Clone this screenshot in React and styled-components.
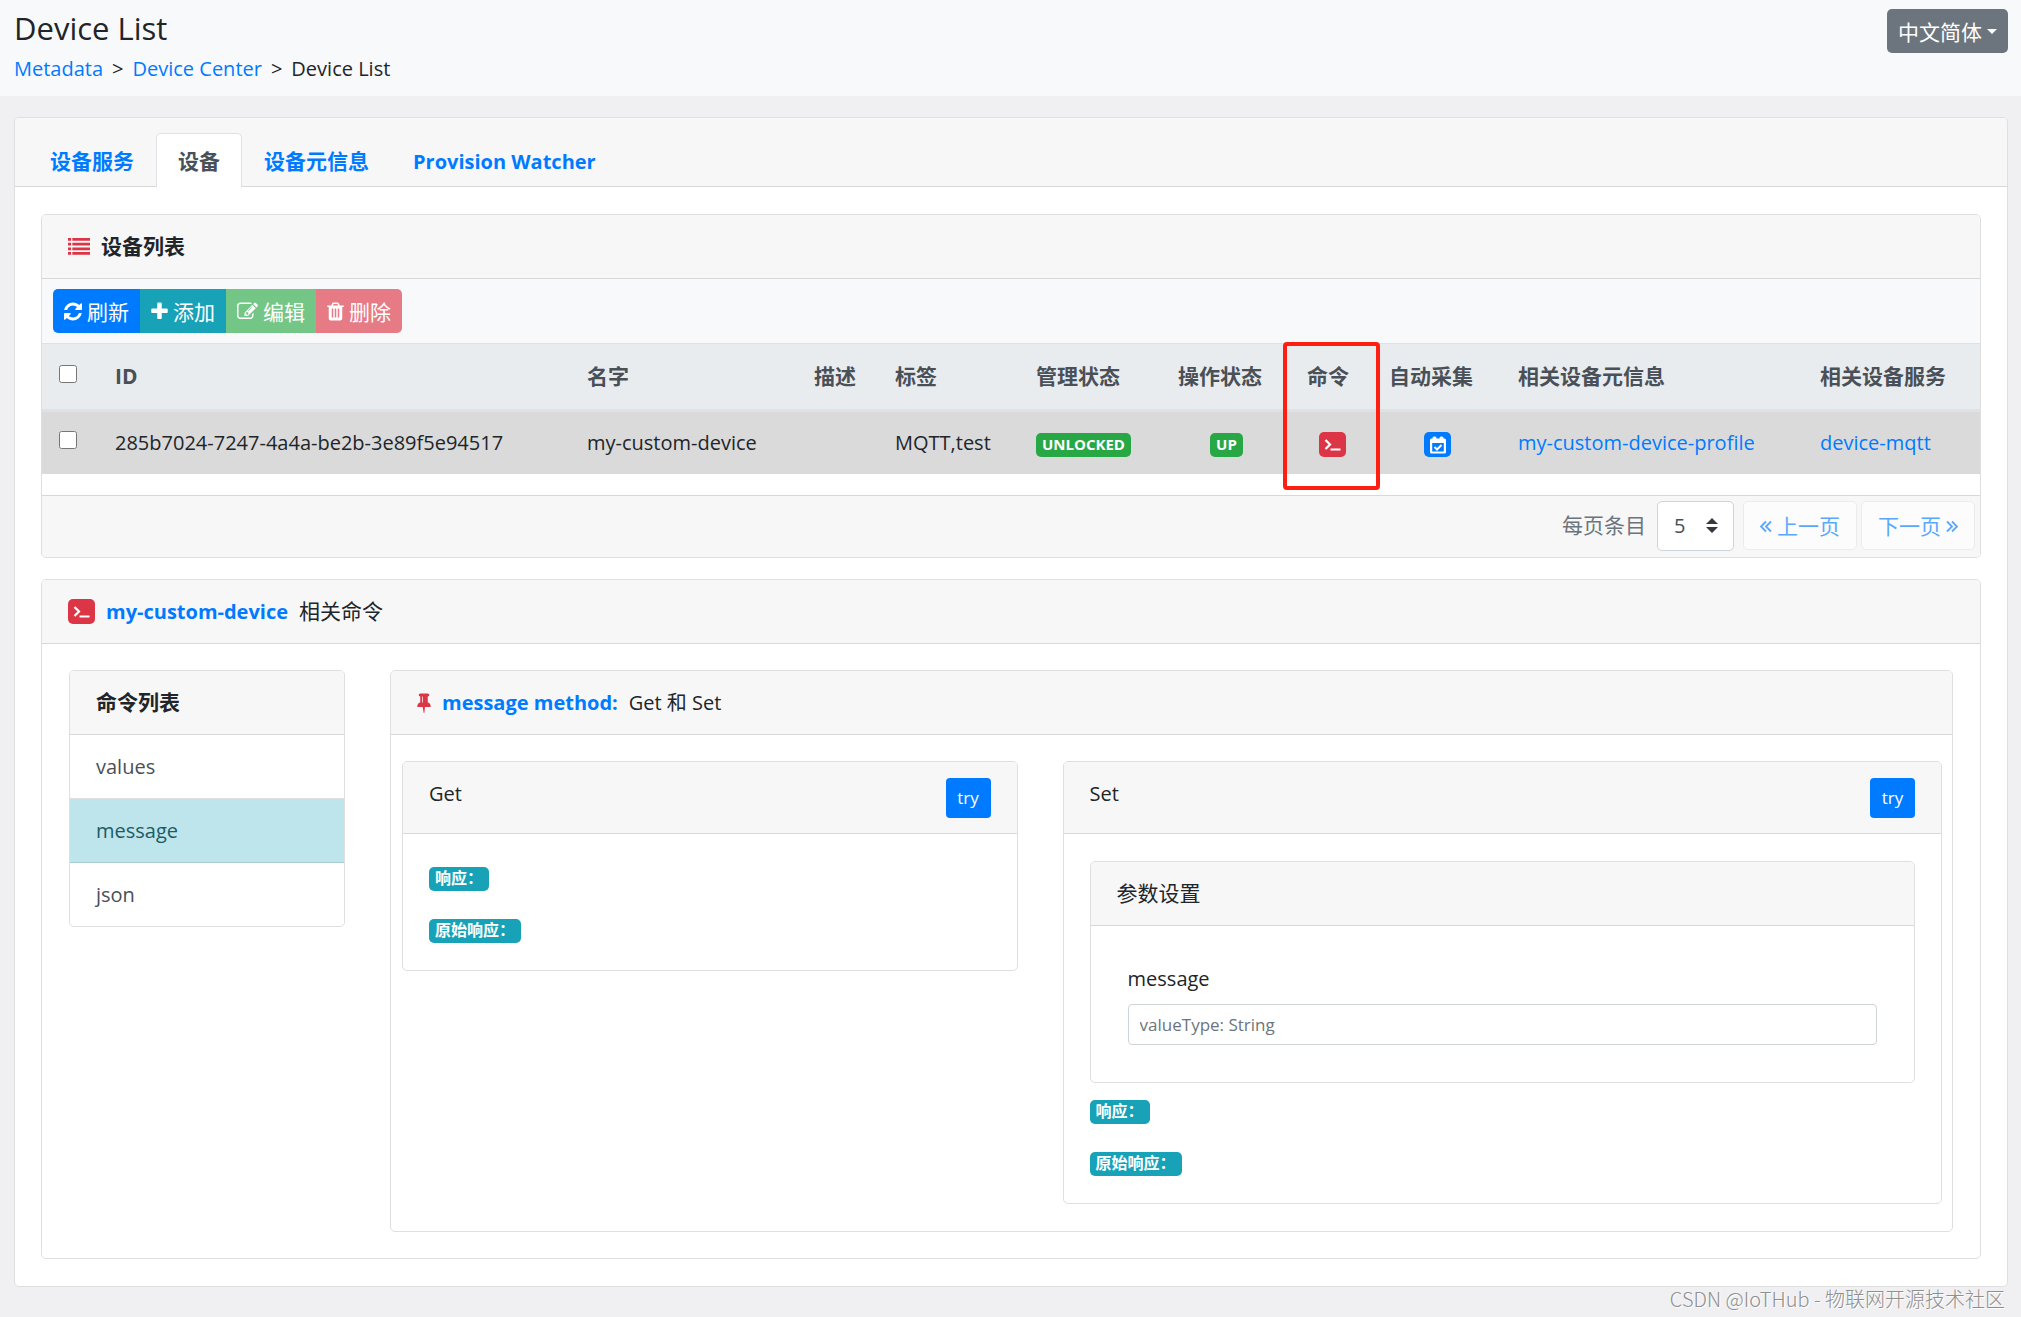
import React, { useState } from "react";
import styled, { createGlobalStyle } from "styled-components";

const GlobalStyle = createGlobalStyle`
* {
  box-sizing: border-box;
}
body {
  margin: 0;
  background: #f0f0f2;
  color: #212529;
  font-family: "Open Sans", "Noto Sans CJK SC", sans-serif;
  font-size: 20px;
  line-height: 31px;
}
button, input, select {
  font-family: inherit;
}
a {
  color: #007bff;
  text-decoration: none;
}
`;

const PageHeader = styled.header`
  display: flex;
  justify-content: space-between;
  align-items: flex-start;
  padding: 9px 13px 12px 14px;
  background: #f8f9fb;
`;

const PageTitle = styled.h1`
  margin: 0 0 5px;
  font-size: 31px;
  font-weight: 500;
  line-height: 39px;
`;

const Breadcrumb = styled.nav`
  display: flex;
  gap: 9px;
  font-weight: 500;
`;

const LangButton = styled.button`
  display: flex;
  align-items: center;
  gap: 5px;
  height: 44px;
  padding: 0 11px;
  border: 0;
  border-radius: 5px;
  background: #6c757d;
  color: #fff;
  font-size: 21px;
`;

const Caret = styled.span`
  border-top: 5px solid #fff;
  border-left: 5px solid transparent;
  border-right: 5px solid transparent;
`;

const Page = styled.main`
  padding: 21px 13px 0 14px;
`;

const Card = styled.section`
  border: 1px solid #dfdfdf;
  border-radius: 5px;
  background: #fff;
  min-width: 0;
`;

const CardHeader = styled.div`
  display: flex;
  align-items: center;
  gap: 11px;
  height: 64px;
  padding: 0 26px;
  border-bottom: 1px solid #d8d8d8;
  border-radius: 4px 4px 0 0;
  background: #f7f7f7;
  font-size: ${(props) => (props.$cjk ? "21px" : "20px")};
  font-weight: ${(props) => (props.$bold ? "bold" : "normal")};
  svg {
    color: #dc3545;
  }
`;

const TabBar = styled.nav`
  display: flex;
  padding: 15px 13px 0;
  border-bottom: 1px solid #d8d8d8;
  border-radius: 4px 4px 0 0;
  background: #f7f7f7;
`;

const Tab = styled.a`
  height: 54px;
  margin-bottom: -1px;
  padding: 12px 21px;
  border: 1px solid ${(props) => (props.$active ? "#dee2e6" : "transparent")};
  border-bottom: 0;
  border-radius: 5px 5px 0 0;
  background: ${(props) => (props.$active ? "#fff" : "transparent")};
  color: ${(props) => (props.$active ? "#495057" : "#007bff")};
  font-size: ${(props) => (props.$cjk ? "21px" : "20px")};
  font-weight: bold;
`;

const TabContent = styled.div`
  display: flex;
  flex-direction: column;
  gap: 21px;
  padding: 27px 26px;
`;

const Toolbar = styled.div`
  display: flex;
  padding: 10px 11px;
  background: #f8f9fb;
`;

const ToolButton = styled.button`
  display: flex;
  align-items: center;
  gap: 5px;
  height: 44px;
  padding: 0 11px;
  border: 0;
  background: ${(props) => props.$color};
  color: #fff;
  font-size: 21px;
  &:first-child {
    border-radius: 5px 0 0 5px;
  }
  &:last-child {
    border-radius: 0 5px 5px 0;
  }
`;

const Table = styled.table`
  width: 100%;
  margin-bottom: 21px;
  border-collapse: collapse;
  table-layout: fixed;
`;

const Th = styled.th`
  position: relative;
  height: 67px;
  padding: 0 0 0 16px;
  border-top: 1px solid #dee2e6;
  border-bottom: 3px solid #dee2e6;
  background: #e9ecef;
  color: #495057;
  font-size: 21px;
  text-align: left;
  white-space: nowrap;
`;

const Td = styled.td`
  height: 63px;
  padding: 0 16px;
  background: #dadada;
  text-align: ${(props) => (props.$center ? "center" : "left")};
  white-space: nowrap;
`;

const CheckBox = styled.input`
  display: block;
  width: 18px;
  height: 18px;
  margin: 0 0 6px 1px;
`;

const Highlight = styled.div`
  position: absolute;
  z-index: 1;
  top: -2px;
  left: -8px;
  right: -7px;
  height: 148px;
  border: 4px solid #ff1e12;
  border-radius: 4px;
`;

const Badge = styled.span`
  display: inline-flex;
  align-items: center;
  height: 24px;
  padding: 0 6px;
  border-radius: 5px;
  background: ${(props) => props.$color};
  color: #fff;
  font-size: ${(props) => (props.$cjk ? "16px" : "15px")};
  font-weight: bold;
  vertical-align: middle;
`;

const IconBadge = styled.span`
  display: inline-flex;
  align-items: center;
  justify-content: center;
  width: 27px;
  height: 25px;
  border-radius: 5px;
  background: ${(props) => props.$color};
  vertical-align: middle;
  && svg {
    color: #fff;
  }
`;

const TableFooter = styled.div`
  display: flex;
  justify-content: flex-end;
  align-items: flex-start;
  height: 62px;
  padding: 5px;
  border-top: 1px solid #d8d8d8;
  border-radius: 0 0 4px 4px;
  background: #f7f7f7;
  font-size: 21px;
`;

const PageSize = styled.label`
  display: flex;
  align-items: center;
  gap: 11px;
  margin-right: 9px;
  color: #6c757d;
`;

const Select = styled.select`
  width: 77px;
  height: 50px;
  padding: 0 16px;
  border: 1px solid #ced4da;
  border-radius: 5px;
  appearance: none;
  background: #fff url("data:image/svg+xml,%3csvg xmlns='http://www.w3.org/2000/svg' viewBox='0 0 4 5'%3e%3cpath fill='%23343a40' d='M2 0L0 2h4zm0 5L0 3h4z'/%3e%3c/svg%3e") no-repeat right 15px center / 12px 15px;
  color: #495057;
  font-size: 20px;
`;

const PagerButton = styled.button`
  display: flex;
  align-items: center;
  justify-content: center;
  gap: 5px;
  width: 114px;
  height: 49px;
  margin-right: ${(props) => (props.$last ? "0" : "4px")};
  padding: 0;
  border: 1px solid #ebecee;
  border-radius: 5px;
  background: #fcfcfc;
  color: #59a8fd;
  font-size: 21px;
`;

const CommandBody = styled.div`
  display: grid;
  grid-template-columns: 276px 1fr;
  align-items: start;
  gap: 45px;
  padding: 26px 27px;
`;

const CommandItem = styled.a`
  display: block;
  padding: 16px 26px;
  border-bottom: 1px solid ${(props) => (props.$active ? "#a9ccd2" : "#dfdfdf")};
  background: ${(props) => (props.$active ? "#bee5eb" : "#fff")};
  color: ${(props) => (props.$active ? "#1d5b66" : "#495057")};
  &:last-child {
    border-bottom: 0;
    border-radius: 0 0 5px 5px;
  }
`;

const DeviceLink = styled.a`
  font-size: 20px;
  font-weight: bold;
`;

const MethodName = styled.strong`
  color: #007bff;
`;

const MethodBody = styled.div`
  display: grid;
  grid-template-columns: 7fr 10fr;
  align-items: start;
  gap: 45px;
  padding: 26px 10px 27px 11px;
`;

const MethodHeader = styled.div`
  display: flex;
  justify-content: space-between;
  align-items: flex-start;
  height: 72px;
  padding: 16px 26px;
  border-bottom: 1px solid #d8d8d8;
  border-radius: 4px 4px 0 0;
  background: #f7f7f7;
`;

const TryButton = styled.button`
  width: 45px;
  height: 40px;
  padding: 0;
  border: 0;
  border-radius: 4px;
  background: #007bff;
  color: #fff;
  font-size: 17px;
`;

const Results = styled.div`
  display: flex;
  flex-direction: column;
  align-items: flex-start;
  gap: 28px;
  padding: ${(props) => (props.$below ? "17px 26px 27px" : "33px 26px 27px")};
`;

const ParamCard = styled(Card)`
  margin: 27px 26px 0;
`;

const ParamForm = styled.div`
  padding: 37px;
`;

const ParamLabel = styled.label`
  display: block;
  margin-bottom: 10px;
`;

const TextInput = styled.input`
  display: block;
  width: 100%;
  height: 41px;
  padding: 0 11px;
  border: 1px solid #ced4da;
  border-radius: 4px;
  font-size: 17px;
  &::placeholder {
    color: #6c757d;
  }
`;

const Watermark = styled.footer`
  padding: 0 16px 4px;
  color: #8f8f8f;
  font-family: "Noto Sans CJK SC", sans-serif;
  font-size: 20px;
  font-weight: 300;
  line-height: 24px;
  text-align: right;
  text-shadow: 1px 1px 0 #fff;
`;

const icons = {
  refresh: {
    box: [128, 1536],
    d: "M1639 1056q0 5-1 7-64 268-268 434.5t-478 166.5q-146 0-282.5-55t-243.5-157l-129 129q-19 19-45 19t-45-19-19-45v-448q0-26 19-45t45-19h448q26 0 45 19t19 45-19 45l-137 137q71 66 161 102t187 36q134 0 250-65t186-179q11-17 53-117 8-23 30-23h192q13 0 22.5 9.5t9.5 22.5zm25-800v448q0 26-19 45t-45 19h-448q-26 0-45-19t-19-45 19-45l138-138q-148-137-349-137-134 0-250 65t-186 179q-11 17-53 117-8 23-30 23h-199q-13 0-22.5-9.5t-9.5-22.5v-7q65-268 270-434.5t480-166.5q146 0 284 55.5t245 156.5l130-129q19-19 45-19t45 19 19 45z",
  },
  plus: {
    box: [192, 1408],
    d: "M1600 736v192q0 40-28 68t-68 28h-416v416q0 40-28 68t-68 28h-192q-40 0-68-28t-28-68v-416h-416q-40 0-68-28t-28-68v-192q0-40 28-68t68-28h416v-416q0-40 28-68t68-28h192q40 0 68 28t28 68v416h416q40 0 68 28t28 68z",
  },
  edit: {
    box: [0, 1792],
    d: "M888 1184l116-116-152-152-116 116v56h96v96h56zm440-720q-16-16-33 1l-350 350q-17 17-1 33t33-1l350-350q17-17 1-33zm80 594v190q0 119-84.5 203.5t-203.5 84.5h-832q-119 0-203.5-84.5t-84.5-203.5v-832q0-119 84.5-203.5t203.5-84.5h832q63 0 117 25 15 7 18 23 3 17-9 29l-49 49q-14 14-32 8-23-6-45-6h-832q-66 0-113 47t-47 113v832q0 66 47 113t113 47h832q66 0 113-47t47-113v-126q0-13 9-22l64-64q15-15 35-7t20 29zm-96-738l288 288-672 672h-288v-288zm444 132l-92 92-288-288 92-92q28-28 68-28t68 28l152 152q28 28 28 68t-28 68z",
  },
  trash: {
    box: [192, 1408],
    d: "M704 1376v-704q0-14-9-23t-23-9h-64q-14 0-23 9t-9 23v704q0 14 9 23t23 9h64q14 0 23-9t9-23zm256 0v-704q0-14-9-23t-23-9h-64q-14 0-23 9t-9 23v704q0 14 9 23t23 9h64q14 0 23-9t9-23zm256 0v-704q0-14-9-23t-23-9h-64q-14 0-23 9t-9 23v704q0 14 9 23t23 9h64q14 0 23-9t9-23zm-544-992h448l-48-117q-7-9-17-11h-317q-10 2-17 11zm928 32v64q0 14-9 23t-23 9h-96v948q0 83-47 143.5t-113 60.5h-832q-66 0-113-58.5t-47-141.5v-952h-96q-14 0-23-9t-9-23v-64q0-14 9-23t23-9h309l70-167q15-37 54-63t79-26h320q40 0 79 26t54 63l70 167h309q14 0 23 9t9 23z",
  },
  list: {
    box: [0, 1792],
    d: "M0 160h256v224H0zM352 160h1440v224H352zM0 544h256v224H0zM352 544h1440v224H352zM0 928h256v224H0zM352 928h1440v224H352zM0 1312h256v224H0zM352 1312h1440v224H352z",
  },
  pin: {
    box: [320, 1152],
    d: "M800 864v-448q0-14-9-23t-23-9-23 9-9 23v448q0 14 9 23t23 9 23-9 9-23zm672 352q0 26-19 45t-45 19h-429l-51 483q-2 12-10.5 20.5t-20.5 8.5h-1q-27 0-32-27l-76-485h-404q-26 0-45-19t-19-45q0-123 78.5-221.5t177.5-98.5v-512q-52 0-90-38t-38-90 38-90 90-38h640q52 0 90 38t38 90-38 90-90 38v512q99 0 177.5 98.5t78.5 221.5z",
  },
};

const Icon = ({ name, width = 21, height = 21 }) => (
  <svg width={width} height={height} viewBox={`${icons[name].box[0]} 0 ${icons[name].box[1]} 1792`} fill="currentColor" aria-hidden="true">
    <path d={icons[name].d} />
  </svg>
);

const DoubleAngle = ({ right }) => (
  <svg width="12" height="16" viewBox="0 0 12 16" fill="none" stroke="currentColor" strokeWidth="1.8" aria-hidden="true">
    <path d={right ? "M1 4.5l5 5-5 5M6 4.5l5 5-5 5" : "M6 4.5l-5 5 5 5M11 4.5l-5 5 5 5"} />
  </svg>
);

const TerminalBadge = () => (
  <IconBadge $color="#dc3545">
    <svg width="17" height="17" viewBox="0 0 17 17" fill="none" stroke="currentColor" strokeWidth="2.2" aria-hidden="true">
      <path d="M1.5 4l4.500 4.500L1.500 13M6.500 13.500h10" />
    </svg>
  </IconBadge>
);

const CalendarBadge = () => (
  <IconBadge $color="#007bff">
    <svg width="16" height="18" viewBox="0 0 16 18" fill="currentColor" aria-hidden="true">
      <path fillRule="evenodd" d="M1.500 2.500h13A1.500 1.500 0 0 1 16 4v12a1.500 1.500 0 0 1-1.500 1.500h-13A1.500 1.500 0 0 1 0 16V4a1.500 1.500 0 0 1 1.500-1.500zM2.200 7v8.500h11.600V7z" />
      <rect x="2.5" y="0.5" width="4" height="4" rx="1.5" />
      <rect x="9.5" y="0.5" width="4" height="4" rx="1.5" />
      <path d="M4.500 11l2.500 2.500 4.500-4.500" fill="none" stroke="currentColor" strokeWidth="2" />
    </svg>
  </IconBadge>
);

const tabs = ["设备服务", "设备", "设备元信息", "Provision Watcher"];
const columnWidths = [57, 472, 227, 81, 141, 142, 129, 82, 129, 302, 176];
const commands = ["values", "message", "json"];

const DeviceTable = () => {
  const [checked, setChecked] = useState(false);
  return (
    <Table>
      <colgroup>
        {columnWidths.map((width, i) => (
          <col key={i} style={{ width }} />
        ))}
      </colgroup>
      <thead>
        <tr>
          <Th>
            <CheckBox type="checkbox" aria-label="全选" checked={checked} onChange={(e) => setChecked(e.target.checked)} />
          </Th>
          <Th>ID</Th>
          <Th>名字</Th>
          <Th>描述</Th>
          <Th>标签</Th>
          <Th>管理状态</Th>
          <Th>操作状态</Th>
          <Th>
            命令
            <Highlight />
          </Th>
          <Th>自动采集</Th>
          <Th>相关设备元信息</Th>
          <Th>相关设备服务</Th>
        </tr>
      </thead>
      <tbody>
        <tr>
          <Td>
            <CheckBox type="checkbox" aria-label="my-custom-device" checked={checked} onChange={(e) => setChecked(e.target.checked)} />
          </Td>
          <Td>285b7024-7247-4a4a-be2b-3e89f5e94517</Td>
          <Td>my-custom-device</Td>
          <Td />
          <Td>MQTT,test</Td>
          <Td>
            <Badge $color="#28a745">UNLOCKED</Badge>
          </Td>
          <Td $center>
            <Badge $color="#28a745">UP</Badge>
          </Td>
          <Td $center>
            <TerminalBadge />
          </Td>
          <Td $center>
            <CalendarBadge />
          </Td>
          <Td>
            <a href="#profile">my-custom-device-profile</a>
          </Td>
          <Td>
            <a href="#service">device-mqtt</a>
          </Td>
        </tr>
      </tbody>
    </Table>
  );
};

const DeviceListCard = () => (
  <Card>
    <CardHeader $cjk $bold>
      <Icon name="list" width={22} height={22} />
      设备列表
    </CardHeader>
    <Toolbar>
      <ToolButton $color="#007bff">
        <Icon name="refresh" width={18} />
        刷新
      </ToolButton>
      <ToolButton $color="#17a2b8">
        <Icon name="plus" width={17} />
        添加
      </ToolButton>
      <ToolButton $color="#74c686">
        <Icon name="edit" />
        编辑
      </ToolButton>
      <ToolButton $color="#e67b85">
        <Icon name="trash" width={17} />
        删除
      </ToolButton>
    </Toolbar>
    <DeviceTable />
    <TableFooter>
      <PageSize>
        每页条目
        <Select defaultValue="5">
          <option value="5">5</option>
          <option value="10">10</option>
        </Select>
      </PageSize>
      <PagerButton>
        <DoubleAngle />
        上一页
      </PagerButton>
      <PagerButton $last>
        下一页
        <DoubleAngle right />
      </PagerButton>
    </TableFooter>
  </Card>
);

const MethodResults = ({ below }) => (
  <Results $below={below}>
    <Badge $cjk $color="#17a2b8">响应：</Badge>
    <Badge $cjk $color="#17a2b8">原始响应：</Badge>
  </Results>
);

const CommandCard = () => {
  const [active, setActive] = useState("message");
  return (
    <Card>
      <CardHeader $cjk>
        <TerminalBadge />
        <DeviceLink href="#device">my-custom-device</DeviceLink>
        相关命令
      </CardHeader>
      <CommandBody>
        <Card>
          <CardHeader $cjk $bold>命令列表</CardHeader>
          {commands.map((name) => (
            <CommandItem key={name} href={"#" + name} $active={name === active} onClick={() => setActive(name)}>
              {name}
            </CommandItem>
          ))}
        </Card>
        <Card>
          <CardHeader>
            <Icon name="pin" width={14} />
            <MethodName>{active} method:</MethodName>
            <span>Get 和 Set</span>
          </CardHeader>
          <MethodBody>
            <Card>
              <MethodHeader>
                Get
                <TryButton>try</TryButton>
              </MethodHeader>
              <MethodResults />
            </Card>
            <Card>
              <MethodHeader>
                Set
                <TryButton>try</TryButton>
              </MethodHeader>
              <ParamCard>
                <CardHeader $cjk>参数设置</CardHeader>
                <ParamForm>
                  <ParamLabel htmlFor="param">{active}</ParamLabel>
                  <TextInput id="param" placeholder="valueType: String" />
                </ParamForm>
              </ParamCard>
              <MethodResults below />
            </Card>
          </MethodBody>
        </Card>
      </CommandBody>
    </Card>
  );
};

const App = () => (
  <>
    <GlobalStyle />
    <PageHeader>
      <div>
        <PageTitle>Device List</PageTitle>
        <Breadcrumb>
          <a href="#metadata">Metadata</a>
          <span>&gt;</span>
          <a href="#center">Device Center</a>
          <span>&gt;</span>
          <span>Device List</span>
        </Breadcrumb>
      </div>
      <LangButton>
        中文简体
        <Caret />
      </LangButton>
    </PageHeader>
    <Page>
      <Card>
        <TabBar>
          {tabs.map((tab, i) => (
            <Tab key={tab} href={"#tab" + i} $active={i === 1} $cjk={i < 3}>
              {tab}
            </Tab>
          ))}
        </TabBar>
        <TabContent>
          <DeviceListCard />
          <CommandCard />
        </TabContent>
      </Card>
    </Page>
    <Watermark>CSDN @IoTHub - 物联网开源技术社区</Watermark>
  </>
);

export default App;
